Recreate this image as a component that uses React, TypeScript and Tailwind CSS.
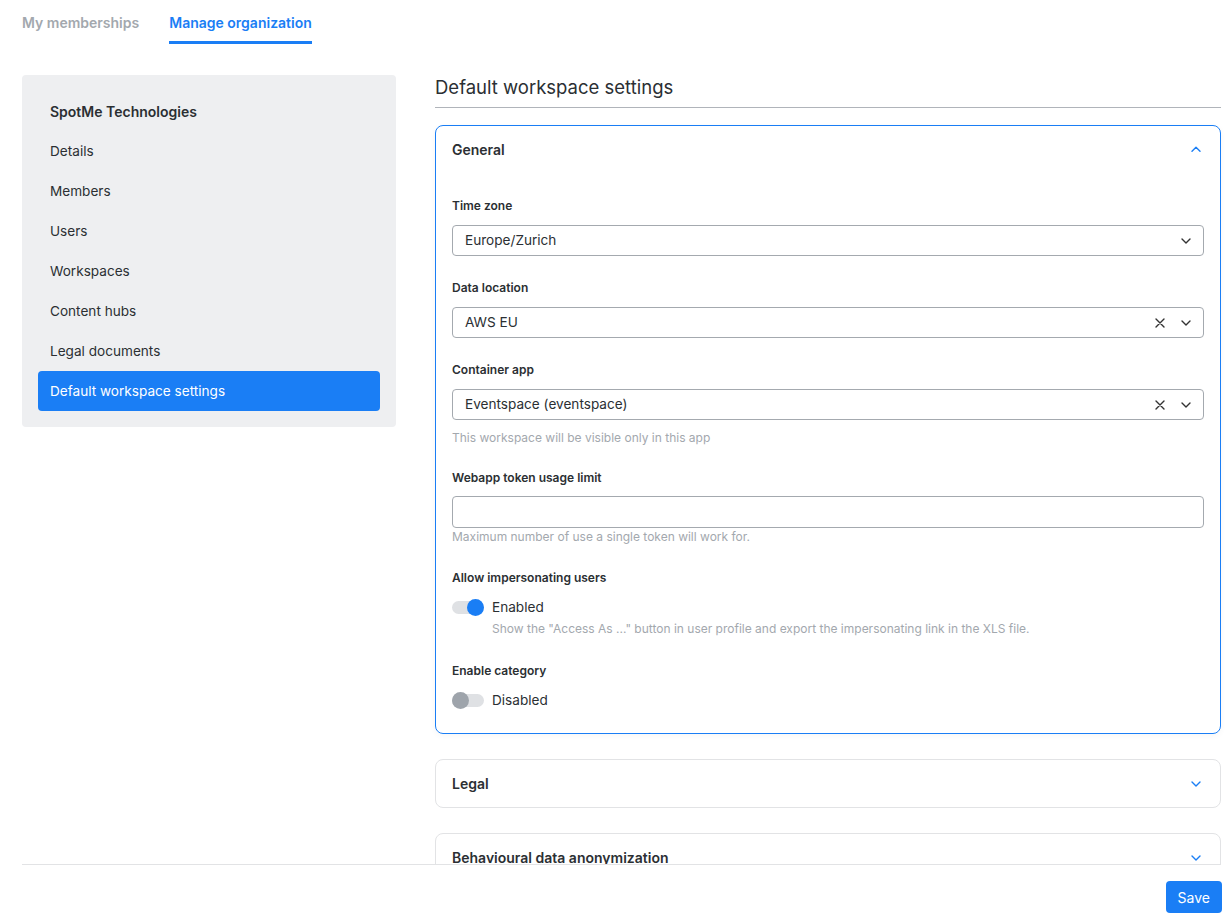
import React from 'react';

const font = { fontFamily: 'Inter, "Noto Sans", Arial, sans-serif' };

const navItems = ['Details', 'Members', 'Users', 'Workspaces', 'Content hubs', 'Legal documents'];

function Chevron({ up, className }: { up?: boolean; className?: string }) {
  return (
    <svg width="10" height="6" viewBox="0 0 10 6" className={className} fill="none">
      <path
        d={up ? 'M1 5.2 5 1.2l4 4' : 'M1 1 5 5l4-4'}
        stroke="currentColor"
        strokeWidth="1.4"
        strokeLinecap="round"
        strokeLinejoin="round"
      />
    </svg>
  );
}

function Cross() {
  return (
    <svg width="10" height="10" viewBox="0 0 10 10" fill="none" className="text-[#333]">
      <path d="M1 1l8 8M9 1 1 9" stroke="currentColor" strokeWidth="1.4" strokeLinecap="round" />
    </svg>
  );
}

function Field({
  label,
  children,
  help,
  helpGap = 'mt-[10px]',
  gap = 'mt-[24px]',
}: {
  label: string;
  children: React.ReactNode;
  help?: string;
  helpGap?: string;
  gap?: string;
}) {
  return (
    <div className={gap}>
      <div className="text-[12px] font-semibold leading-[16px] text-[#2b2f33]">{label}</div>
      <div className="mt-[11px]">{children}</div>
      {help && <div className={`${helpGap} text-[12px] leading-[16px] text-[#a3a8ae]`}>{help}</div>}
    </div>
  );
}

function Select({ value, clearable }: { value: string; clearable?: boolean }) {
  return (
    <div className="flex h-[31px] items-center rounded-[4px] border border-[#a4a9af] pl-[12px] pr-[12px]">
      <span className="flex-1 text-[13.6px] text-[#2b2f33]">{value}</span>
      {clearable && (
        <span className="mr-[16px] flex">
          <Cross />
        </span>
      )}
      <Chevron className="text-[#333]" />
    </div>
  );
}

function Toggle({ on, label, help }: { on: boolean; label: string; help?: string }) {
  return (
    <div>
      <div className="flex h-[17px] items-center">
        <span className="relative flex h-[17px] w-[32px] items-center">
          <span className="h-[13px] w-[32px] rounded-full bg-[#dfe1e4]" />
          <span
            className={
              on
                ? 'absolute right-0 top-0 h-[17px] w-[17px] rounded-full bg-[#1a7ef5]'
                : 'absolute left-0 top-0 h-[17px] w-[17px] rounded-full bg-[#9ea4ab]'
            }
          />
        </span>
        <span className="ml-[8px] text-[13.6px] text-[#2b2f33]">{label}</span>
      </div>
      {help && <div className="ml-[40px] mt-[5px] text-[12px] leading-[16px] text-[#a3a8ae]">{help}</div>}
    </div>
  );
}

function CollapsedCard({ title }: { title: string }) {
  return (
    <div className="mt-[25px] flex h-[49px] shrink-0 items-center justify-between rounded-[8px] border border-[#e2e3e5] pl-[16px] pr-[19px]">
      <span className="text-[14px] font-semibold text-[#2b2f33]">{title}</span>
      <Chevron className="text-[#1a7ef5]" />
    </div>
  );
}

export default function App() {
  return (
    <div style={font} className="flex h-[920px] flex-col overflow-hidden bg-white">
      <div className="h-[864px] overflow-hidden">
        <div className="flex gap-[30px] pl-[22px] text-[14px] font-semibold">
          <div className="pt-[12px] text-[#a3a8ae]">My memberships</div>
          <div className="border-b-[3px] border-[#1a7ef5] pb-[8px] pt-[12px] text-[#1a7ef5]">Manage organization</div>
        </div>

        <div className="mt-[31px] flex pl-[22px] pr-[8px]">
          <aside className="h-[352px] w-[374px] shrink-0 rounded-[4px] bg-[#eeeff1] px-[16px] py-[16px]">
            <div className="flex h-[40px] items-center px-[12px] text-[14px] font-semibold text-[#2b2f33]">
              SpotMe Technologies
            </div>
            {navItems.map((item) => (
              <div key={item} className="flex h-[40px] items-center px-[12px] text-[13.6px] text-[#2b2f33]">
                {item}
              </div>
            ))}
            <div className="flex h-[40px] items-center rounded-[4px] bg-[#1a7ef5] px-[12px] text-[13.6px] text-white">
              Default workspace settings
            </div>
          </aside>

          <main className="ml-[39px] flex flex-1 flex-col">
            <h1 className="border-b border-[#b0b4ba] pb-[8px] text-[18.5px] leading-[24px] text-[#2b2f33]">
              Default workspace settings
            </h1>

            <section className="mt-[17px] rounded-[8px] border border-[#1a7ef5] pb-[24px] shadow-[0_2px_6px_rgba(0,0,0,0.04)]">
              <div className="flex h-[46px] items-center justify-between pl-[16px] pr-[19px]">
                <span className="text-[14px] font-semibold text-[#2b2f33]">General</span>
                <Chevron up className="text-[#1a7ef5]" />
              </div>
              <div className="px-[16px] pt-[26px]">
                <Field label="Time zone" gap="mt-0">
                  <Select value="Europe/Zurich" />
                </Field>
                <Field label="Data location">
                  <Select value="AWS EU" clearable />
                </Field>
                <Field label="Container app" help="This workspace will be visible only in this app">
                  <Select value="Eventspace (eventspace)" clearable />
                </Field>
                <Field
                  label="Webapp token usage limit"
                  help="Maximum number of use a single token will work for."
                  helpGap="mt-[1px]"
                >
                  <div className="-mt-[1px] h-[32px] rounded-[4px] border border-[#a4a9af]" />
                </Field>
                <Field label="Allow impersonating users" gap="mt-[25px]">
                  <div className="mt-[13px]">
                    <Toggle
                      on
                      label="Enabled"
                      help={'Show the "Access As ..." button in user profile and export the impersonating link in the XLS file.'}
                    />
                  </div>
                </Field>
                <Field label="Enable category" gap="mt-[26px]">
                  <div className="mt-[13px]">
                    <Toggle on={false} label="Disabled" />
                  </div>
                </Field>
              </div>
            </section>

            <CollapsedCard title="Legal" />
            <CollapsedCard title="Behavioural data anonymization" />
          </main>
        </div>
      </div>

      <div className="ml-[22px] mr-[8px] flex justify-end border-t border-[#e2e3e5] pt-[16px]">
        <button className="-mr-[1px] h-[32px] rounded-[4px] bg-[#1a7ef5] px-[12px] text-[14px] text-white">Save</button>
      </div>
    </div>
  );
}
